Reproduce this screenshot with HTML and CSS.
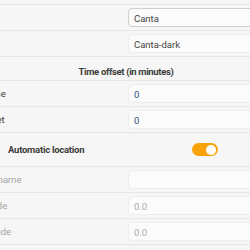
FILE: index.html
```html
<!DOCTYPE html>
<html lang="en">
<head>
    <meta charset="UTF-8">
    <title>Preferences</title>
    <link rel="stylesheet" href="styles.css">
</head>
<body>
    <div class="prefs">
        <div class="section-title">Themes</div>
        <div class="row">
            <span class="label"></span>
            <div class="entry focused">Canta</div>
        </div>
        <div class="row">
            <span class="label"></span>
            <div class="entry">Canta-dark</div>
        </div>

        <div class="section-title">Time offset (in minutes)</div>
        <div class="row">
            <span class="label">Sunrise</span>
            <div class="entry number">0</div>
        </div>
        <div class="row">
            <span class="label">Sunset</span>
            <div class="entry number">0</div>
        </div>

        <div class="row switch-row">
            <span class="switch-label">Automatic location</span>
            <span class="switch on"><span class="knob"></span></span>
        </div>
        <div class="row">
            <span class="label disabled">Location name</span>
            <div class="entry"></div>
        </div>
        <div class="row">
            <span class="label disabled">Latitude</span>
            <div class="entry disabled">0.0</div>
        </div>
        <div class="row">
            <span class="label disabled">Longitude</span>
            <div class="entry disabled">0.0</div>
        </div>
    </div>
</body>
</html>
```
FILE: styles.css
```css
body, html {
    margin: 0;
    height: 100%;
    overflow: hidden;
    background: #f6f6f6;
    font-family: Roboto, "Open Sans", sans-serif;
    font-size: 9.5px;
    color: #3c3c3c;
}

.prefs {
    width: 576px;
    margin-left: -162px;
    margin-top: -19px;
}

.section-title {
    height: 24px;
    display: flex;
    align-items: flex-end;
    justify-content: center;
    padding-bottom: 3px;
    box-sizing: border-box;
    font-weight: bold;
    letter-spacing: -0.35px;
    border-bottom: 1px solid #e6e6e6;
}

.row {
    display: grid;
    grid-template-columns: 290px 1fr;
    align-items: center;
    height: 25px;
    border-bottom: 1px solid #e6e6e6;
}

.label {
    text-align: center;
    padding-left: 14px;
}

.label.disabled {
    color: #a5a5a5;
}

.entry {
    height: 19px;
    line-height: 19px;
    padding-left: 5px;
    background: #fbfbfb;
    border: 1px solid #ededed;
    border-radius: 4px;
    box-sizing: border-box;
    color: #444;
}

.entry.focused {
    border-color: #cfcfcf;
}

.entry.number {
    color: #2f4f7a;
}

.entry.disabled {
    color: #aaaaaa;
}

.switch-row {
    display: flex;
    height: 33px;
}

.switch-label {
    width: 354px;
    padding-left: 170px;
    box-sizing: border-box;
    font-weight: bold;
    letter-spacing: -0.25px;
}

.switch {
    width: 26px;
    height: 13px;
    border-radius: 7px;
    background: #f8a30c;
    display: flex;
    align-items: center;
    justify-content: flex-end;
    padding: 0 2px;
    box-sizing: border-box;
}

.knob {
    width: 10px;
    height: 10px;
    border-radius: 50%;
    background: #fff;
}
```
